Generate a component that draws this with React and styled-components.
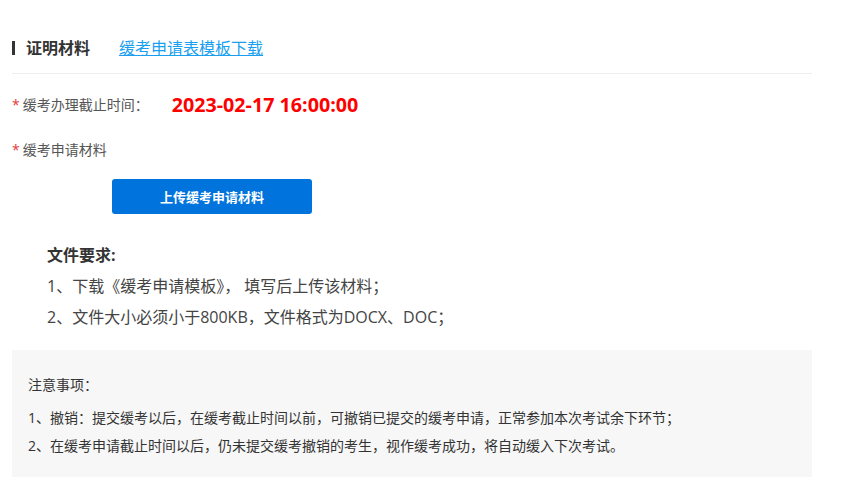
import React from 'react';
import styled, { createGlobalStyle } from 'styled-components';

const GlobalStyle = createGlobalStyle`
  body {
    margin: 0;
    background: #fff;
    font-family: "Open Sans", "Noto Sans CJK SC", sans-serif;
    color: #333;
  }
`;

const Page = styled.div`
  width: 800px;
  padding: 0 12px;
`;

const Header = styled.div`
  display: flex;
  align-items: center;
  padding-top: 36px;
  padding-bottom: 13px;
  border-bottom: 1px solid #eeeeee;
`;

const TitleBar = styled.span`
  width: 3px;
  height: 14px;
  background: #333;
`;

const Title = styled.h2`
  margin: 0 0 0 11px;
  font-size: 16px;
  line-height: 24px;
  font-weight: 700;
  color: #333;
`;

const TemplateLink = styled.a`
  margin-left: 29px;
  font-size: 16px;
  line-height: 24px;
  color: #1a9ff0;
  text-decoration: underline;
  cursor: pointer;
`;

const FormRow = styled.div`
  display: flex;
  align-items: center;
  margin-top: ${(p) => p.$top}px;
  line-height: ${(p) => p.$lh}px;
`;

const Label = styled.span`
  font-size: 14px;
  color: #555;
`;

const Required = styled.span`
  color: #e4393c;
  margin-right: 3px;
`;

const Deadline = styled.span`
  margin-left: 23px;
  font-size: 19.7px;
  font-weight: 700;
  color: #ff0000;
`;

const UploadButton = styled.button`
  display: block;
  margin: 17px 0 0 100px;
  width: 200px;
  height: 35px;
  border: none;
  border-radius: 3px;
  background: #0073dc;
  color: #fff;
  font-family: inherit;
  font-size: 13px;
  font-weight: 700;
  cursor: pointer;
`;

const Requirements = styled.div`
  margin-top: 25px;
  padding-left: 35px;
  font-size: 16px;
  color: #444;
`;

const ReqTitle = styled.div`
  font-weight: 700;
  line-height: 32px;
  color: #333;
`;

const ReqLine = styled.div`
  line-height: 31px;
`;

const Notice = styled.div`
  margin-top: 17px;
  padding: 24px 16px 26px;
  background: #f7f7f7;
  font-size: 14px;
  color: #333;
`;

const NoticeTitle = styled.div`
  line-height: 22px;
  margin-bottom: 8px;
`;

const NoticeLine = styled.div`
  line-height: 28px;
`;

export default function App() {
  return (
    <>
      <GlobalStyle />
      <Page>
        <Header>
          <TitleBar />
          <Title>证明材料</Title>
          <TemplateLink>缓考申请表模板下载</TemplateLink>
        </Header>

        <FormRow $top={15} $lh={32}>
          <Label>
            <Required>*</Required>缓考办理截止时间：
          </Label>
          <Deadline>2023-02-17 16:00:00</Deadline>
        </FormRow>

        <FormRow $top={17} $lh={24}>
          <Label>
            <Required>*</Required>缓考申请材料
          </Label>
        </FormRow>

        <UploadButton>上传缓考申请材料</UploadButton>

        <Requirements>
          <ReqTitle>文件要求:</ReqTitle>
          <ReqLine>1、下载《缓考申请模板》， 填写后上传该材料；</ReqLine>
          <ReqLine>2、文件大小必须小于800KB，文件格式为DOCX、DOC；</ReqLine>
        </Requirements>

        <Notice>
          <NoticeTitle>注意事项：</NoticeTitle>
          <NoticeLine>1、撤销：提交缓考以后，在缓考截止时间以前，可撤销已提交的缓考申请，正常参加本次考试余下环节；</NoticeLine>
          <NoticeLine>2、在缓考申请截止时间以后，仍未提交缓考撤销的考生，视作缓考成功，将自动缓入下次考试。</NoticeLine>
        </Notice>
      </Page>
    </>
  );
}
